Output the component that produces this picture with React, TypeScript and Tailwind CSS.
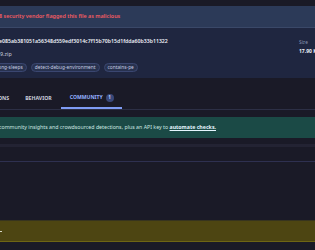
import React from "react";

export default function App() {
  const font = { fontFamily: '"Noto Sans", "Open Sans", sans-serif' };
  return (
    <div className="w-[315px] h-[250px] overflow-hidden bg-[#1a1a27]" style={font}>
      <div className="h-[6px] bg-[#1a1a26]" />
      {/* red banner */}
      <div className="h-[22px] bg-[#2c3a58] border-b border-[#3a4868] flex items-center">
        <span className="-ml-[1px] text-[5.4px] font-semibold text-[#f25c62] whitespace-nowrap leading-none">
          8 security vendor flagged this file as malicious
        </span>
      </div>
      {/* card */}
      <div className="h-[50px] bg-[#1f2640] flex">
        <div className="flex-1 flex flex-col pt-[10px] min-w-0">
          <div className="-ml-[1px] h-[7px] flex items-center text-[5.2px] font-semibold text-[#eef0f6] whitespace-nowrap leading-none">
            e085ab381051a56348d559edf3014c7f15b70b15d1fdda60b33b11322
          </div>
          <div className="mt-[6px] ml-0 h-[7px] flex items-center text-[5.4px] text-[#c9cedc] whitespace-nowrap leading-none">
            9.zip
          </div>
          <div className="mt-[5px] -ml-[7px] flex gap-[4px] items-center">
            <span className="h-[9px] px-[3px] rounded-full bg-[#28324f] border border-[#3a4670] text-[4.8px] text-[#c5cbe0] flex items-center leading-none whitespace-nowrap">
              long-sleeps
            </span>
            <span className="h-[9px] px-[3px] rounded-full bg-[#28324f] border border-[#3a4670] text-[4.8px] text-[#c5cbe0] flex items-center leading-none whitespace-nowrap">
              detect-debug-environment
            </span>
            <span className="h-[9px] px-[3px] rounded-full bg-[#28324f] border border-[#3a4670] text-[4.8px] text-[#c5cbe0] flex items-center leading-none whitespace-nowrap">
              contains-pe
            </span>
          </div>
        </div>
        <div className="w-[24px] flex pt-[12px]">
          <div className="w-px h-[18px] bg-[#34405e]" />
          <div className="ml-[8px] flex flex-col">
            <span className="text-[4.8px] text-[#8592b0] leading-none">Size</span>
            <span className="mt-[4px] text-[5px] font-bold text-[#f0f2f8] leading-none whitespace-nowrap">17.90 KB</span>
          </div>
        </div>
      </div>
      {/* tabs */}
      <div className="mt-[12px] border-b border-[#2c2f45] flex items-end h-[20px]">
        <div className="h-full flex items-center pb-[2px] -ml-[23px] pr-[7px] text-[5.2px] font-bold text-[#c9ccda] leading-none">
          DETECTIONS
        </div>
        <div className="h-full flex items-center pb-[2px] px-[9px] text-[5.2px] font-bold text-[#c9ccda] leading-none">
          BEHAVIOR
        </div>
        <div className="h-full flex items-center gap-[3px] pb-[2px] pl-[9px] pr-[8px] border-b-2 border-[#7f9cf5] text-[5.1px] font-bold text-[#93b0ff] leading-none">
          COMMUNITY
          <span className="w-[8px] h-[8px] rounded-full bg-[#39487a] text-[#c8d4ff] text-[4.6px] flex items-center justify-center">1</span>
        </div>
      </div>
      {/* green banner */}
      <div className="mt-[7px] h-[21px] bg-[#1b4a46] flex items-center">
        <span className="-ml-[1px] text-[5.25px] text-[#cde7e2] whitespace-nowrap leading-none">
          community insights and crowdsourced detections, plus an API key to{" "}
          <span className="font-bold underline text-[#e6f6ff]">automate checks.</span>
        </span>
      </div>
      <div className="mt-[6px] h-[3px] bg-[#232333]" />
      <div className="h-[14px]" />
      <div className="h-px bg-[#2e3050]" />
      <div className="h-[58px]" />
      {/* yellow band */}
      <div className="h-[22px] bg-[#4d4512] border-t border-[#37341e] border-b border-b-[#6e6514] flex items-center">
        <span className="w-[2px] h-px bg-[#d8d8c8]" />
      </div>
    </div>
  );
}
